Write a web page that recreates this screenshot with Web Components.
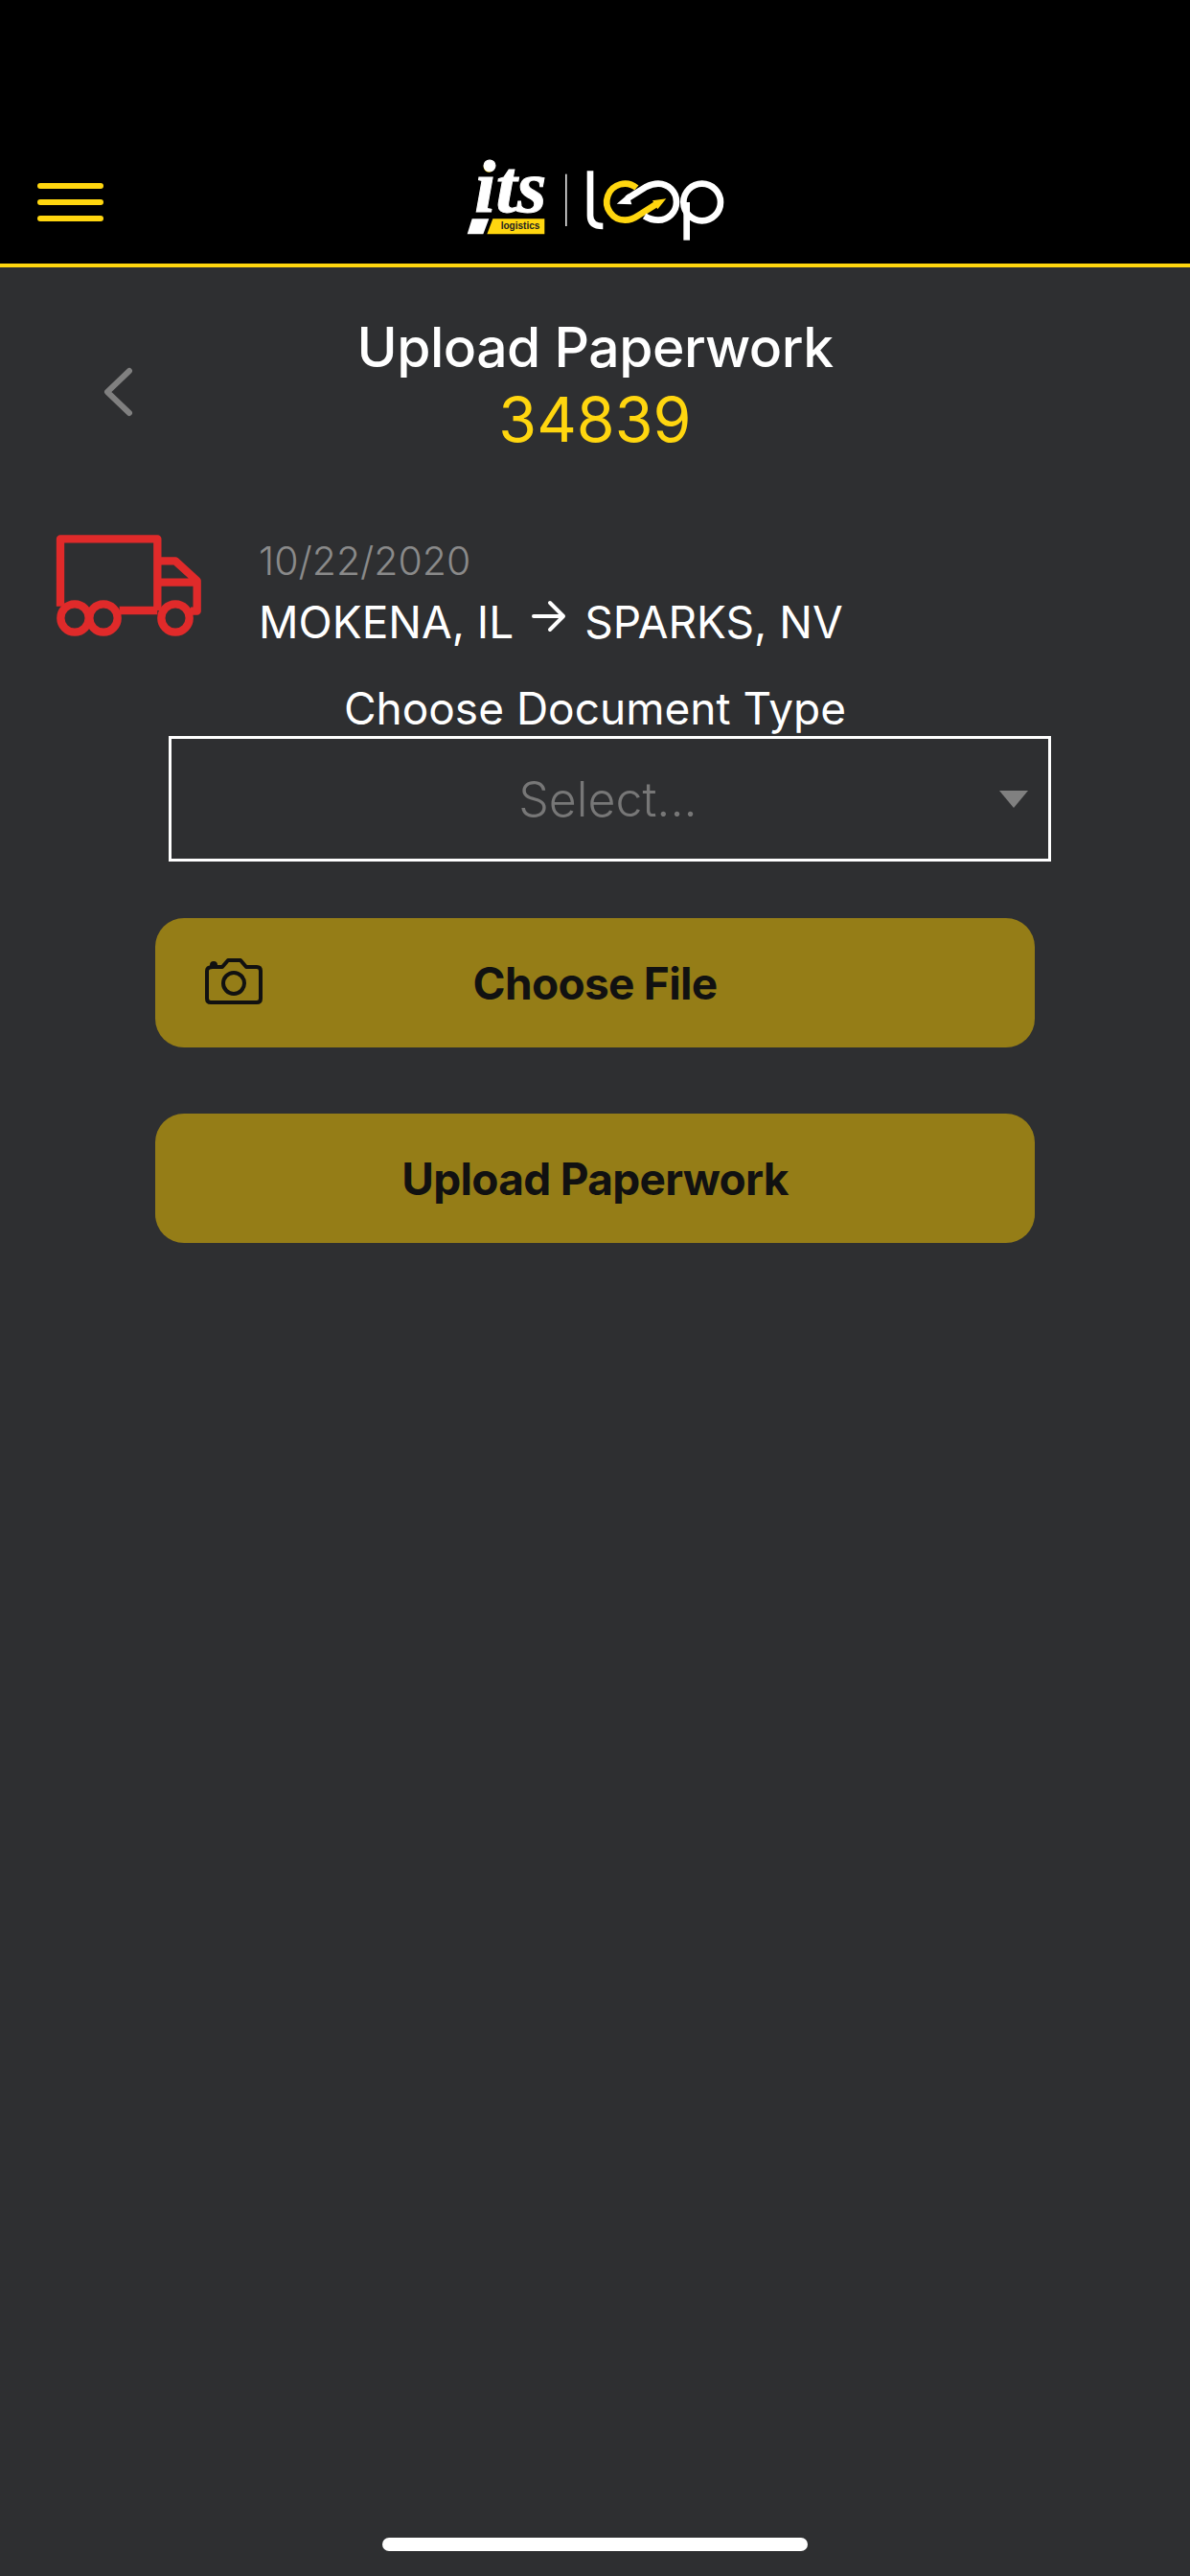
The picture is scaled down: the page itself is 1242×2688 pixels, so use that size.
<!DOCTYPE html>
<html><head><meta charset="utf-8"><style>
html,body{margin:0;padding:0;background:#2e2f31}
body{width:1242px;height:2688px;overflow:hidden;font-family:Inter,"Liberation Sans",sans-serif}
</style></head><body>
<app-shell>
<its-header></its-header>
<page-title number="34839">Upload Paperwork</page-title>
<load-summary date="10/22/2020" from="MOKENA, IL" to="SPARKS, NV"></load-summary>
<doc-select label="Choose Document Type" placeholder="Select..."></doc-select>
<action-button icon="camera">Choose File</action-button>
<action-button>Upload Paperwork</action-button>
</app-shell>
<script>
function def(name,html){customElements.define(name,class extends HTMLElement{connectedCallback(){if(this.shadowRoot)return;const s=this.attachShadow({mode:'open'});s.innerHTML=html;}});}
def('app-shell',`<style>:host{display:flex;flex-direction:column;height:2688px;box-sizing:border-box;position:relative;color:#fff}
.home{position:absolute;left:399px;top:2648px;width:444px;height:14px;border-radius:7px;background:#fff}
</style><slot></slot><div class="home"></div>`);
def('its-header',`<style>:host{display:block;height:279px;box-sizing:border-box;background:#000;border-bottom:4px solid #ffd60f;position:relative}
.in{display:flex;justify-content:center;padding-top:150px}
.burger{position:absolute;left:39px;top:191px;width:69px;display:flex;flex-direction:column;gap:11px}
.burger i{display:block;height:6px;border-radius:3px;background:#ffd60f}
svg{display:block}
</style><div class="burger"><i></i><i></i><i></i></div><div class="in"><svg width="340" height="120" viewBox="0 0 1020 360">
<circle cx="178" cy="72" r="17" fill="#ffd60f"/>
<text x="133" y="212" font-family="Liberation Serif" font-weight="700" font-style="italic" font-size="235" fill="#fff" stroke="#fff" stroke-width="3" textLength="225" lengthAdjust="spacingAndGlyphs">its</text>
<path d="M125 235H178L160 283H110Z" fill="#fff"/>
<path d="M190 235H352V283H172Z" fill="#ffd60f"/>
<text x="215" y="267" font-family="Liberation Sans" font-weight="700" font-size="30" fill="#222" textLength="122" lengthAdjust="spacingAndGlyphs">logistics</text>
<rect x="417" y="95" width="5" height="163" fill="#ddd"/>
<g fill="none" stroke-width="20">
<path d="M495 85V225Q495 258 535 258" stroke="#fff"/>
<path d="M640 138A57 57 0 1 0 604 239Q625 239 645 225L700 190" stroke="#ffd60f"/>
<path d="M610 172L670 135Q690 125 708 125A57 57 0 0 1 708 239Q685 239 665 226" stroke="#fff"/>
<circle cx="845" cy="183" r="58" stroke="#fff"/>
<path d="M797 183V302" stroke="#fff"/>
</g>
<path d="M578 188L615 157L625 190Z" fill="#fff"/>
<path d="M733 172L690 178L706 205Z" fill="#ffd60f"/>
</svg></div>`);
customElements.define('page-title',class extends HTMLElement{connectedCallback(){const s=this.attachShadow({mode:'open'});s.innerHTML=`<style>:host{display:grid;grid-template-columns:1fr auto 1fr;align-items:center;padding-top:49px}
.back{padding-left:105px;padding-top:12px}
.t{font-size:57px;line-height:70px;font-weight:500;text-align:center;letter-spacing:-.5px}
.n{font-size:64.5px;line-height:80px;color:#ffd60f;text-align:center;font-weight:400}
svg{display:block}</style>
<div class="back"><svg width="36" height="52" viewBox="0 0 36 52"><path d="M30 4L7 26L30 48" fill="none" stroke="#808080" stroke-width="6" stroke-linecap="round" stroke-linejoin="round"/></svg></div>
<div><div class="t"><slot></slot></div><div class="n">${this.getAttribute('number')}</div></div><div></div>`;}});
customElements.define('load-summary',class extends HTMLElement{connectedCallback(){const s=this.attachShadow({mode:'open'});s.innerHTML=`<style>:host{display:flex;gap:58px;padding:78px 0 0 58px;align-items:flex-start}
svg{display:block;flex:none}
.d{font-size:41px;line-height:58px;color:#8a8a8a;font-weight:300}
.r{font-size:46px;line-height:58px;margin-top:6px;display:flex;align-items:center;gap:19px;font-weight:400}
.r svg{margin:-12px 0 0}</style>
<svg width="154" height="110" viewBox="85 650 462 330" fill="none" stroke="#e02a2a" stroke-width="25" stroke-linejoin="round"><path d="M100 880V669H404V893M285 893H404M404 738H460L528 800V895H508M404 805H528"/><circle cx="145" cy="917" r="44"/><circle cx="235" cy="917" r="44"/><circle cx="460" cy="917" r="44"/></svg>
<div><div class="d">${this.getAttribute('date')}</div><div class="r"><span>${this.getAttribute('from')}</span><svg width="36" height="36" viewBox="0 0 36 36" fill="none" stroke="#fff" stroke-width="4" stroke-linecap="round" stroke-linejoin="round"><path d="M2 18H33M19 4L33 18L19 32"/></svg><span>${this.getAttribute('to')}</span></div></div>`;}});
customElements.define('doc-select',class extends HTMLElement{connectedCallback(){const s=this.attachShadow({mode:'open'});s.innerHTML=`<style>:host{display:block;padding:32px 0 25px}
.l{font-size:46px;line-height:58px;text-align:center}
.b{margin:0 0 0 176px;width:921px;height:131px;box-sizing:border-box;border:3px solid #fff;display:flex;align-items:center;justify-content:center;position:relative;font-size:50px;color:#777;font-weight:300}
.a{position:absolute;right:21px;top:54px;width:0;height:0;border:15px solid transparent;border-top:18px solid #808080;border-bottom:0}
span{margin-left:-4px}</style><div class="l">${this.getAttribute('label')}</div><div class="b"><span>${this.getAttribute('placeholder')}</span><div class="a"></div></div>`;}});
customElements.define('action-button',class extends HTMLElement{connectedCallback(){const s=this.attachShadow({mode:'open'});const cam=this.getAttribute('icon')==='camera'?`<svg class="c" width="60" height="48" viewBox="0 0 60 48" fill="none" stroke="#111" stroke-width="4" stroke-linejoin="round"><path d="M8 9H18L24 2H37L43 9H54Q58 9 58 13V42Q58 46 54 46H6Q2 46 2 42V13Q2 9 8 9Z"/><circle cx="30" cy="26" r="11"/><circle cx="9" cy="7" r="2" fill="#111"/></svg>`:'';s.innerHTML=`<style>:host{display:flex;margin:34px 0 35px 162px;width:918px;height:135px;border-radius:30px;background:#957d17;align-items:center;justify-content:center;position:relative;color:#111;font-size:46px;font-weight:700;letter-spacing:-.7px}
.c{position:absolute;left:52px;top:42px}</style>${cam}<slot></slot>`;}});
</script></body></html>
